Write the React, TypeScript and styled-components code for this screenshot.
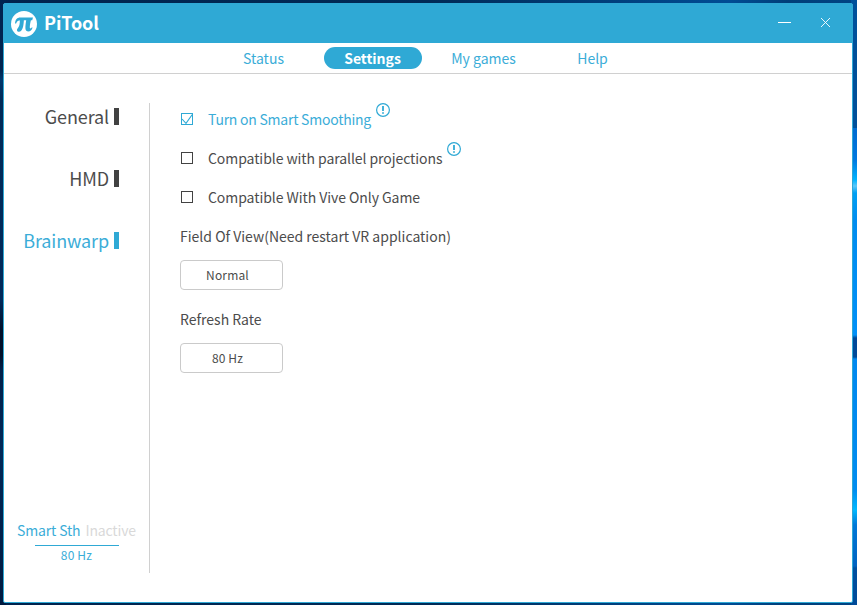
import React from "react";
import styled, { createGlobalStyle } from "styled-components";

const BLUE = "#2fa9d5";
const BLUE_TEXT = "#3badd8";
const INK = "#424242";
const INK_TEXT = "#4c4c4c";

const GlobalStyle = createGlobalStyle`
  * { box-sizing: border-box; }
  body {
    margin: 0;
    overflow: hidden;
    font-family: "Noto Sans CJK SC", "Noto Sans", sans-serif;
    color: ${INK_TEXT};
  }
`;

const Desktop = styled.div`
  width: 857px;
  height: 605px;
  padding: 3px 4px 2px 3px;
  background:
    linear-gradient(180deg, #00509a 0 128px, #006bd0 128px, #0078e0 160px, #00b4ff 180px, #5cc8fa 186px, #00a0f4 193px, #008cf0 220px, #0090f8 335px, #00489a 338px, #004a98 357px, #0088f0 359px, #008cf0 490px, #00b8ff 510px, #0078d8 525px, #0062c0 566px, #0050a0 568px, #004a98 100%) right / 6px 100% no-repeat,
    linear-gradient(180deg, #002450 0 70px, #00376c 80px, #002a58 100px, #00295a 300px, #00102a 330px, #00102a 355px, #00204a 370px, #002858 450px, #001a40 100%) left / 6px 100% no-repeat,
    linear-gradient(90deg, #00234e 0, #002a56 50%, #004c94 85%, #003e78 92%, #004484 100%);
`;

const AppWindow = styled.div`
  display: flex;
  flex-direction: column;
  width: 850px;
  height: 600px;
  background: #fff;
  border: 1px solid ${BLUE};
  border-radius: 2px;
`;

const TitleBar = styled.header`
  display: flex;
  align-items: center;
  height: 39px;
  padding-left: 7px;
  background: ${BLUE};
  color: #fff;
`;

const Title = styled.h1`
  flex: 1;
  margin: 0 0 2px 7px;
  font-size: 18px;
  letter-spacing: -0.1px;
  line-height: 37px;
  font-weight: 700;
`;

const WindowButton = styled.button`
  display: flex;
  align-items: center;
  justify-content: center;
  width: 41px;
  height: 37px;
  padding: 0;
  border: 0;
  background: none;
  color: #fff;
`;

const WindowControls = styled.div`
  display: flex;
  margin: 0 6px 2px 0;
`;

const NavBar = styled.nav`
  display: flex;
  height: 31px;
  padding: 4px 0 0 199px;
  border-bottom: 1px solid #d0d0d0;
`;

const Tab = styled.a<{ $active?: boolean; $width: number }>`
  width: ${(p) => p.$width}px;
  height: 22px;
  padding-right: ${(p) => (p.$active ? 1 : 0)}px;
  border-radius: 11px;
  text-align: center;
  font-size: 14px;
  line-height: 23px;
  font-weight: ${(p) => (p.$active ? 700 : 400)};
  color: ${(p) => (p.$active ? "#fff" : BLUE_TEXT)};
  background: ${(p) => (p.$active ? BLUE : "transparent")};
`;

const Body = styled.div`
  display: flex;
  padding-top: 29px;
  height: 499px;
`;

const Sidebar = styled.aside`
  display: flex;
  flex-direction: column;
  justify-content: space-between;
  width: 146px;
  height: 470px;
  border-right: 1px solid #d0d0d0;
`;

const Menu = styled.div`
  display: flex;
  flex-direction: column;
  gap: 34px;
`;

const MenuItem = styled.a<{ $active?: boolean }>`
  display: flex;
  justify-content: flex-end;
  height: 28px;
  margin-right: 30px;
  font-size: 18px;
  letter-spacing: -0.13px;
  line-height: 26px;
  color: ${(p) => (p.$active ? BLUE_TEXT : INK_TEXT)};

  &::after {
    content: "";
    width: 5px;
    height: 17px;
    margin: 5px 0 0 5px;
    background: ${(p) => (p.$active ? BLUE : INK)};
  }
`;

const StatusBox = styled.div`
  display: flex;
  flex-direction: column;
  align-items: center;
  padding-bottom: 7px;
  color: ${BLUE_TEXT};
`;

const StatusLine = styled.div`
  display: flex;
  gap: 5px;
  width: 119px;
  font-size: 14px;
  letter-spacing: -0.15px;
  line-height: 25px;
  white-space: nowrap;
`;

const Muted = styled.span`
  color: #d9d9d9;
`;

const StatusRate = styled.div`
  width: 84px;
  height: 21px;
  margin-top: 2px;
  border-top: 1px solid ${BLUE};
  text-align: center;
  font-size: 12px;
  letter-spacing: 0.2px;
  line-height: 18px;
`;

const Settings = styled.main`
  display: flex;
  flex-direction: column;
  padding-left: 30px;
`;

const OptionRow = styled.label<{ $checked?: boolean }>`
  display: flex;
  height: 39px;
  font-size: 14px;
  line-height: 33px;
  color: ${(p) => (p.$checked ? BLUE_TEXT : INK_TEXT)};
`;

const OptionText = styled.span<{ $tracking: number }>`
  margin-left: 14px;
  letter-spacing: ${(p) => p.$tracking}px;
`;

const CheckSvg = styled.svg<{ $checked?: boolean }>`
  margin-top: 9px;
  flex: none;
  color: ${(p) => (p.$checked ? BLUE : INK)};
`;

const InfoSvg = styled.svg`
  margin-left: 5px;
  color: ${BLUE};
`;

const FieldLabel = styled.div`
  height: 40px;
  font-size: 14px;
  line-height: 33px;
`;

const Select = styled.button`
  width: 103px;
  height: 30px;
  margin: 0 0 13px;
  padding: 0 8px 0 0;
  border: 1px solid #cacaca;
  border-radius: 4px;
  background: #fff;
  font-family: inherit;
  font-size: 12px;
  letter-spacing: 0.15px;
  line-height: 28px;
  color: ${INK_TEXT};
`;

const Logo = () => (
  <svg width="26" height="26" viewBox="0 0 26 26">
    <circle cx="13" cy="13" r="13" fill="#fff" />
    <path d="M4 12.400C4.400 8.600 6 6.500 9.300 6.500H22l-.8 2.800H9.600c-2.400 0-3.600.8-4.500 3.100z" fill={BLUE} />
    <path d="M8.800 8.500C9 13 8.400 15.500 6.600 17.400c-1.300 1.500-.4 3.400 1.300 3.400 3.700 0 4.800-6 5-12.300zM15.300 8.500c-.5 3.500-1 6.500-.9 8.800.1 4.600 6 4.400 7.200-.7h-1c-.6 1.300-1.900 1.100-1.800-.6.100-2.300.7-4.900 1.200-7.500z" fill={BLUE} />
  </svg>
);

const Checkbox = ({ checked }: { checked?: boolean }) => (
  <CheckSvg $checked={checked} width="14" height="14" viewBox="0 0 14 14" fill="none" stroke="currentColor">
    <rect x="1.500" y="1.500" width="11" height="11" />
    {checked && <path d="M2 7l4 4.300L12.300 2.500" strokeWidth="1.100" />}
  </CheckSvg>
);

const Info = () => (
  <InfoSvg width="14" height="14" viewBox="0 0 14 14" fill="none" stroke="currentColor">
    <circle cx="7" cy="7" r="6.400" strokeWidth="1.200" />
    <path d="M7 3v5M7 9.200v1.500" strokeWidth="1.800" />
  </InfoSvg>
);

const options = [
  { label: "Turn on Smart Smoothing", tracking: -0.24, checked: true, info: true },
  { label: "Compatible with parallel projections", tracking: -0.07, info: true },
  { label: "Compatible With Vive Only Game", tracking: -0.06 },
];

export default function App() {
  return (
    <>
      <GlobalStyle />
      <Desktop>
        <AppWindow>
          <TitleBar>
            <Logo />
            <Title>PiTool</Title>
            <WindowControls>
              <WindowButton aria-label="Minimize">
                <svg width="13" height="13"><path d="M0 6.500h13" stroke="currentColor" /></svg>
              </WindowButton>
              <WindowButton aria-label="Close">
                <svg width="11" height="11"><path d="M1 1l9 9M10 1l-9 9" stroke="currentColor" strokeWidth=".9" /></svg>
              </WindowButton>
            </WindowControls>
          </TitleBar>
          <NavBar>
            <Tab $width={121}>Status</Tab>
            <Tab $width={98} $active>Settings</Tab>
            <Tab $width={123}>My games</Tab>
            <Tab $width={95}>Help</Tab>
          </NavBar>
          <Body>
            <Sidebar>
              <Menu>
                <MenuItem>General</MenuItem>
                <MenuItem>HMD</MenuItem>
                <MenuItem $active>Brainwarp</MenuItem>
              </Menu>
              <StatusBox>
                <StatusLine>
                  <span>Smart Sth</span>
                  <Muted>Inactive</Muted>
                </StatusLine>
                <StatusRate>80 Hz</StatusRate>
              </StatusBox>
            </Sidebar>
            <Settings>
              {options.map((o) => (
                <OptionRow key={o.label} $checked={o.checked}>
                  <Checkbox checked={o.checked} />
                  <OptionText $tracking={o.tracking}>{o.label}</OptionText>
                  {o.info && <Info />}
                </OptionRow>
              ))}
              <FieldLabel>Field Of View(Need restart VR application)</FieldLabel>
              <Select>Normal</Select>
              <FieldLabel>Refresh Rate</FieldLabel>
              <Select>80 Hz</Select>
            </Settings>
          </Body>
        </AppWindow>
      </Desktop>
    </>
  );
}
